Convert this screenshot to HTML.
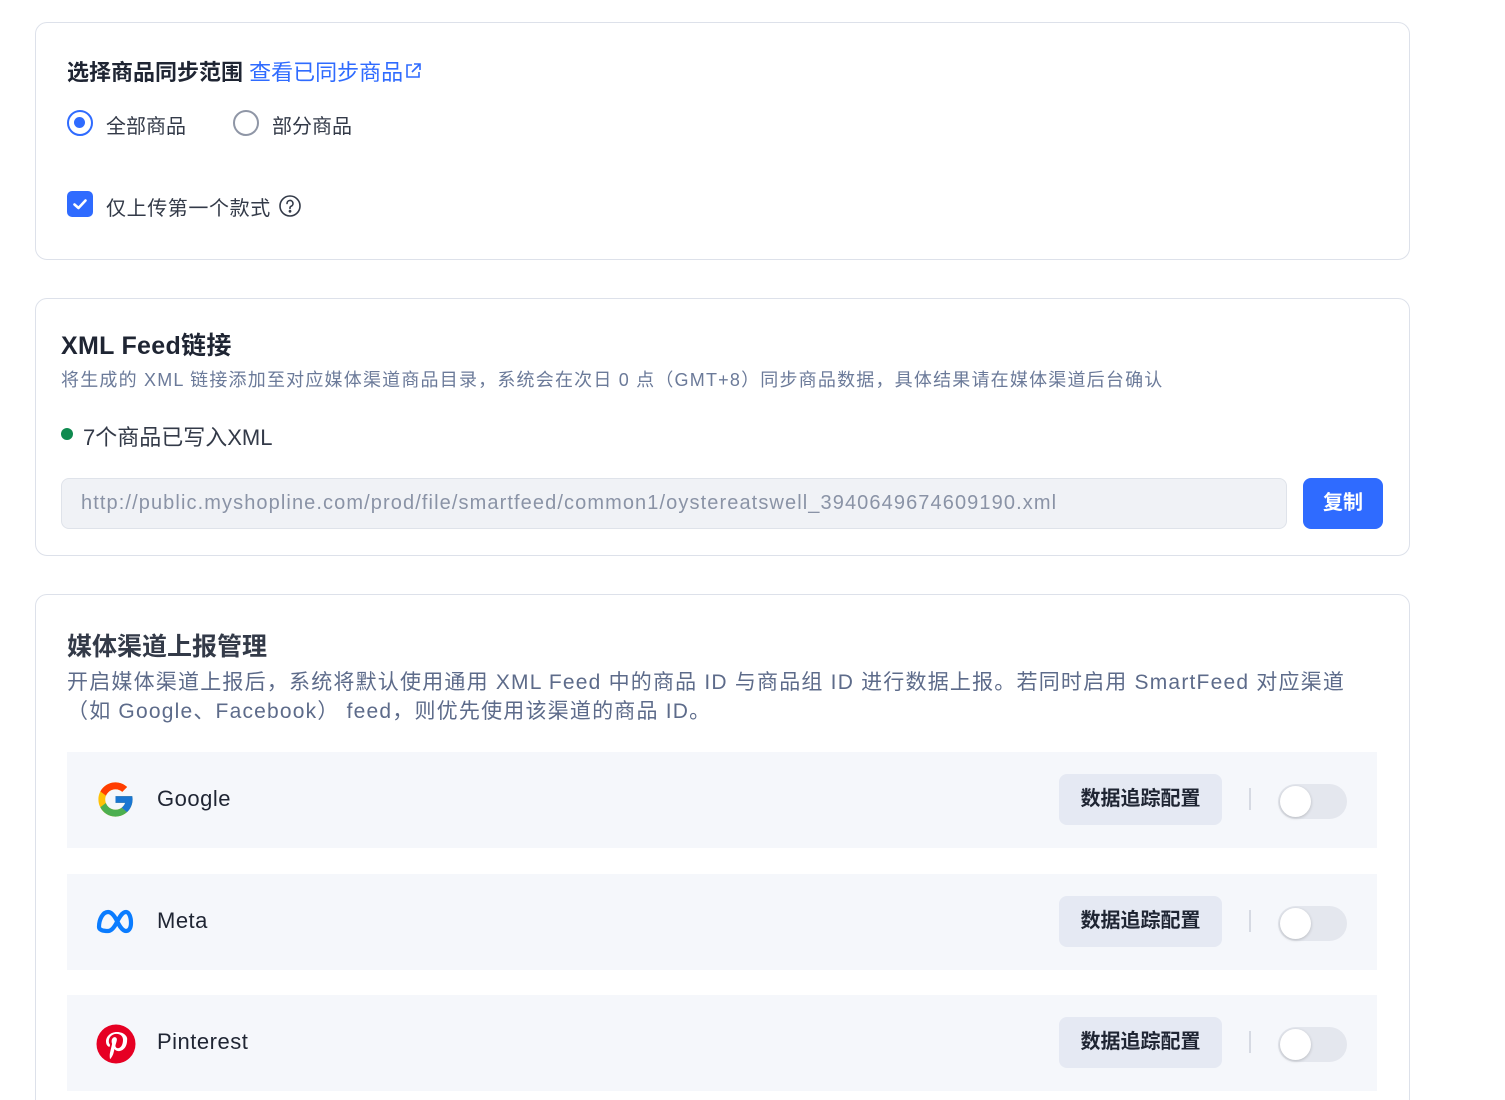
<!DOCTYPE html>
<html style="overflow:hidden;height:1100px"><head><meta charset="utf-8"><style>
*{box-sizing:border-box;margin:0;padding:0}
body{width:1505px;height:1100px;background:#fff;position:relative;overflow:hidden;font-family:"Liberation Sans","Noto Sans CJK SC",sans-serif;color:#1f2533}
.card{position:absolute;left:35px;width:1375px;border:1px solid #dde1ea;border-radius:12px;background:#fff}
.a{position:absolute;white-space:nowrap}
.row{position:absolute;left:67px;width:1310px;height:96px;background:#f5f7fb}
.btn{position:absolute;left:992px;top:22px;width:163px;height:51px;background:#e5e9f3;border-radius:8px;font-size:20px;line-height:51px;text-align:center;color:#1f2533;font-weight:bold}
.div{position:absolute;left:1182px;top:36px;width:2px;height:22px;background:#d6dae3}
.tg{position:absolute;left:1211px;top:32px;width:69px;height:35px;border-radius:18px;background:#e4e7ee}
.tg:after{content:"";position:absolute;left:2px;top:2px;width:31px;height:31px;border-radius:50%;background:#fff;box-shadow:0 1px 3px rgba(0,0,0,.2)}
.nm{position:absolute;left:90px;top:34px;font-size:22px;color:#1f2533;letter-spacing:.5px}
</style></head><body>
<div class="card" style="top:22px;height:238px"></div>
<div class="a" style="left:67px;top:55px;font-size:22px;font-weight:bold;color:#1f2533">选择商品同步范围 <span style="color:#2f6bff;font-weight:normal">查看已同步商品</span></div>
<svg class="a" style="left:404px;top:62px" width="18" height="18" viewBox="0 0 18 18" fill="none" stroke="#2f6bff" stroke-width="1.6"><path d="M8 3H3v12h12v-5M10 2h6v6M16 2l-8 8"/></svg>
<div class="a" style="left:67px;top:110px;width:26px;height:26px;border-radius:50%;border:2.5px solid #2f6bff"><div style="position:absolute;left:5px;top:5px;width:11px;height:11px;border-radius:50%;background:#2f6bff"></div></div>
<div class="a" style="left:106px;top:110px;font-size:20px;color:#333a48">全部商品</div>
<div class="a" style="left:233px;top:110px;width:26px;height:26px;border-radius:50%;border:2.5px solid #8f96a6"></div>
<div class="a" style="left:272px;top:110px;font-size:20px;color:#333a48">部分商品</div>
<div class="a" style="left:67px;top:191px;width:26px;height:26px;border-radius:5px;background:#2f6bff"><svg width="26" height="26" viewBox="0 0 26 26"><path d="M7.5 13.5l4 3.5 7-7.5" fill="none" stroke="#fff" stroke-width="2.6" stroke-linecap="round" stroke-linejoin="round"/></svg></div>
<div class="a" style="left:106px;top:192px;font-size:20px;color:#333a48;letter-spacing:.6px">仅上传第一个款式</div>
<svg class="a" style="left:278px;top:194px" width="24" height="24" viewBox="0 0 24 24" fill="none" stroke="#333a48" stroke-width="1.6"><circle cx="12" cy="12" r="10"/><path d="M9 9.5a3 3 0 1 1 4 2.8c-.7.3-1 .9-1 1.7v.5" stroke-linecap="round"/><circle cx="12" cy="17.3" r=".6" fill="#333a48"/></svg>

<div class="card" style="top:298px;height:258px"></div>
<div class="a" style="left:61px;top:326px;font-size:25px;font-weight:bold;color:#1f2533;letter-spacing:.3px">XML Feed链接</div>
<div class="a" style="left:61px;top:366px;font-size:18px;color:#6b7a99;letter-spacing:1.2px">将生成的 XML 链接添加至对应媒体渠道商品目录，系统会在次日 0 点（GMT+8）同步商品数据，具体结果请在媒体渠道后台确认</div>
<div class="a" style="left:61px;top:428px;width:12px;height:12px;border-radius:50%;background:#0f8a4f"></div>
<div class="a" style="left:83px;top:420px;font-size:22px;color:#333a48">7个商品已写入XML</div>
<div class="a" style="left:61px;top:478px;width:1226px;height:51px;background:#f0f2f6;border:1px solid #dfe3ea;border-radius:8px;font-size:20px;line-height:49px;padding-left:19px;color:#8a93a6;letter-spacing:1.1px">http://public.myshopline.com/prod/file/smartfeed/common1/oystereatswell_3940649674609190.xml</div>
<div class="a" style="left:1303px;top:478px;width:80px;height:51px;background:#2f6bff;border-radius:8px;color:#fff;font-size:20px;font-weight:bold;line-height:51px;text-align:center">复制</div>

<div class="card" style="top:594px;height:560px"></div>
<div class="a" style="left:67px;top:627px;font-size:25px;font-weight:bold;color:#333a48">媒体渠道上报管理</div>
<div class="a" style="left:67px;top:668px;font-size:21px;line-height:29px;color:#5d6b8a;letter-spacing:1.2px">开启媒体渠道上报后，系统将默认使用通用 XML Feed 中的商品 ID 与商品组 ID 进行数据上报。若同时启用 SmartFeed 对应渠道<br>（如 Google、Facebook） feed，则优先使用该渠道的商品 ID。</div>

<div class="row" style="top:752px">
<svg class="a" style="left:28px;top:27px" width="41" height="41" viewBox="0 0 48 48"><path fill="#FFC107" d="M43.6 20.1H42V20H24v8h11.3C33.7 32.7 29.2 36 24 36c-6.6 0-12-5.4-12-12s5.4-12 12-12c3.1 0 5.8 1.2 7.9 3.1l5.7-5.7C34 6.1 29.3 4 24 4 12.9 4 4 12.9 4 24s8.9 20 20 20 20-8.9 20-20c0-1.3-.1-2.6-.4-3.9z"/><path fill="#FF3D00" d="M6.3 14.7l6.6 4.8C14.7 15.1 19 12 24 12c3.1 0 5.8 1.2 7.9 3.1l5.7-5.7C34 6.1 29.3 4 24 4 16.3 4 9.7 8.3 6.3 14.7z"/><path fill="#4CAF50" d="M24 44c5.2 0 9.9-2 13.4-5.2l-6.2-5.2C29.2 35.1 26.7 36 24 36c-5.2 0-9.6-3.3-11.3-7.9l-6.5 5C9.5 39.6 16.2 44 24 44z"/><path fill="#1976D2" d="M43.6 20.1H42V20H24v8h11.3c-.8 2.2-2.2 4.2-4.1 5.6l6.2 5.2C37 39.2 44 34 44 24c0-1.3-.1-2.6-.4-3.9z"/></svg>
<div class="nm">Google</div><div class="btn">数据追踪配置</div><div class="div"></div><div class="tg"></div></div>

<div class="row" style="top:874px">
<svg class="a" style="left:28px;top:33px" width="41" height="28" viewBox="0 0 41 28"><path d="M4 20c0-8 4-15 9-15 4 0 7 5 9 9s5 10 9 10c3 0 5-3 5-8 0-6-2-11-5-11-4 0-7 6-9 10s-5 9-9 9c-5 0-9-1-9-4z" fill="none" stroke="#0a7cff" stroke-width="4.2" stroke-linejoin="round"/></svg>
<div class="nm">Meta</div><div class="btn">数据追踪配置</div><div class="div"></div><div class="tg"></div></div>

<div class="row" style="top:995px">
<svg class="a" style="left:29px;top:29px" width="40" height="40" viewBox="0 0 40 40"><circle cx="20" cy="20" r="19.5" fill="#e60023"/><path d="M21 8c-7 0-11 5-11 9.5 0 2.5 1 4.5 3 5.3.3.1.6 0 .7-.4l.3-1.2c.1-.4 0-.5-.2-.8-.6-.7-1-1.7-1-3 0-4 3-7.5 7.7-7.5 4.2 0 6.5 2.6 6.5 6 0 4.5-2 8.3-5 8.3-1.6 0-2.9-1.4-2.5-3.1.5-2 1.4-4.2 1.4-5.6 0-1.3-.7-2.4-2.2-2.4-1.7 0-3.1 1.8-3.1 4.2 0 1.5.5 2.6.5 2.6l-2.1 8.8c-.6 2.6-.1 5.8 0 6.1 0 .2.3.2.4.1.2-.2 2.3-2.9 3-5.5l1.1-4.4c.6 1.1 2.2 2.1 3.9 2.1 5.2 0 8.7-4.7 8.7-11C32 12.6 27.9 8 21 8z" fill="#fff"/></svg>
<div class="nm">Pinterest</div><div class="btn">数据追踪配置</div><div class="div"></div><div class="tg"></div></div>
</body></html>
